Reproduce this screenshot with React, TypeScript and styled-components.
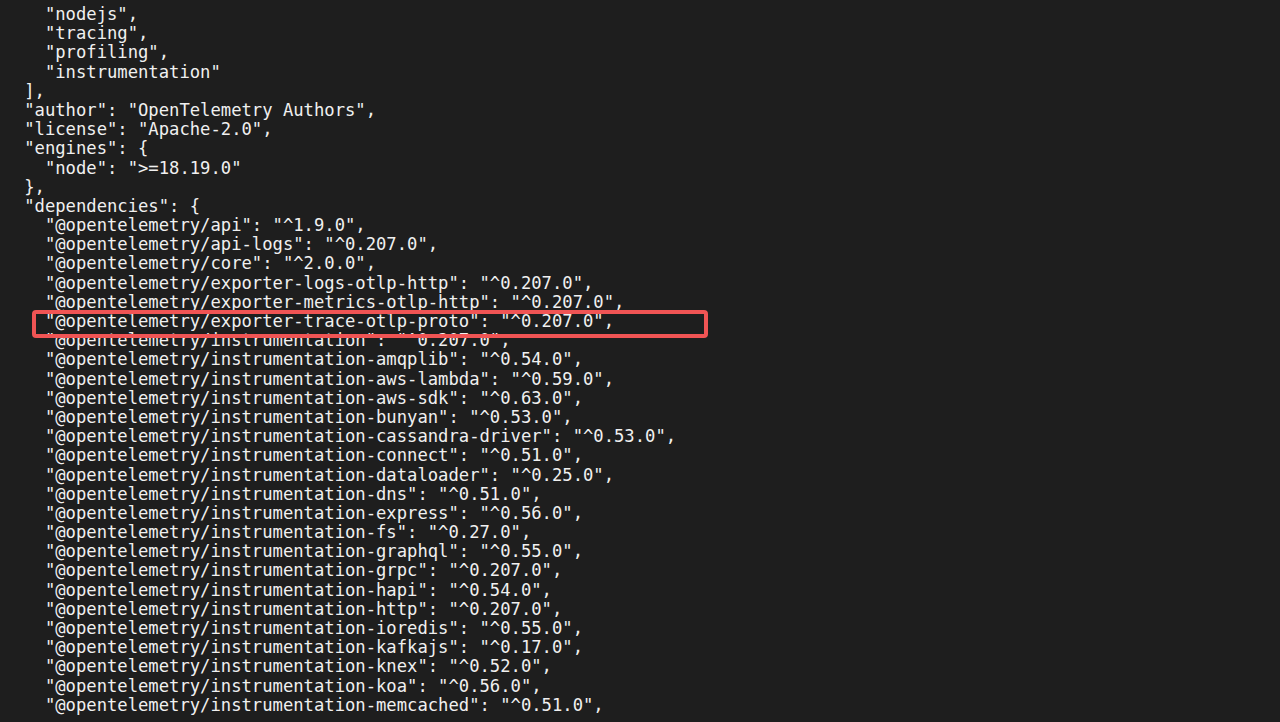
import React from "react";
import styled, { createGlobalStyle } from "styled-components";

const GlobalStyle = createGlobalStyle`
  html, body {
    margin: 0;
    padding: 0;
    background: #1e1e1e;
  }
  body {
    width: 1280px;
    height: 722px;
    overflow: hidden;
  }
`;

const Screen = styled.div`
  position: relative;
  width: 1280px;
  height: 722px;
  background: #1e1e1e;
  overflow: hidden;
`;

const Code = styled.pre`
  margin: 0;
  padding: 5px 0 0 3.5px;
  font-family: "DejaVu Sans Mono", "Liberation Mono", monospace;
  font-size: 17.2px;
  line-height: 19.2px;
  color: #f0f0f0;
  white-space: pre;
`;

const Line = styled.div`
  height: 19.2px;
`;

const Highlight = styled.div`
  position: absolute;
  left: 32px;
  top: 310px;
  width: 676px;
  height: 28px;
  box-sizing: border-box;
  border: 4px solid #f05454;
  border-radius: 4px;
  pointer-events: none;
`;

const lines: string[] = [
  '    "nodejs",',
  '    "tracing",',
  '    "profiling",',
  '    "instrumentation"',
  "  ],",
  '  "author": "OpenTelemetry Authors",',
  '  "license": "Apache-2.0",',
  '  "engines": {',
  '    "node": ">=18.19.0"',
  "  },",
  '  "dependencies": {',
  '    "@opentelemetry/api": "^1.9.0",',
  '    "@opentelemetry/api-logs": "^0.207.0",',
  '    "@opentelemetry/core": "^2.0.0",',
  '    "@opentelemetry/exporter-logs-otlp-http": "^0.207.0",',
  '    "@opentelemetry/exporter-metrics-otlp-http": "^0.207.0",',
  '    "@opentelemetry/exporter-trace-otlp-proto": "^0.207.0",',
  '    "@opentelemetry/instrumentation": "^0.207.0",',
  '    "@opentelemetry/instrumentation-amqplib": "^0.54.0",',
  '    "@opentelemetry/instrumentation-aws-lambda": "^0.59.0",',
  '    "@opentelemetry/instrumentation-aws-sdk": "^0.63.0",',
  '    "@opentelemetry/instrumentation-bunyan": "^0.53.0",',
  '    "@opentelemetry/instrumentation-cassandra-driver": "^0.53.0",',
  '    "@opentelemetry/instrumentation-connect": "^0.51.0",',
  '    "@opentelemetry/instrumentation-dataloader": "^0.25.0",',
  '    "@opentelemetry/instrumentation-dns": "^0.51.0",',
  '    "@opentelemetry/instrumentation-express": "^0.56.0",',
  '    "@opentelemetry/instrumentation-fs": "^0.27.0",',
  '    "@opentelemetry/instrumentation-graphql": "^0.55.0",',
  '    "@opentelemetry/instrumentation-grpc": "^0.207.0",',
  '    "@opentelemetry/instrumentation-hapi": "^0.54.0",',
  '    "@opentelemetry/instrumentation-http": "^0.207.0",',
  '    "@opentelemetry/instrumentation-ioredis": "^0.55.0",',
  '    "@opentelemetry/instrumentation-kafkajs": "^0.17.0",',
  '    "@opentelemetry/instrumentation-knex": "^0.52.0",',
  '    "@opentelemetry/instrumentation-koa": "^0.56.0",',
  '    "@opentelemetry/instrumentation-memcached": "^0.51.0",',
];

export default function App() {
  return (
    <Screen>
      <GlobalStyle />
      <Code>
        {lines.map((l, i) => (
          <Line key={i}>{l}</Line>
        ))}
      </Code>
      <Highlight />
    </Screen>
  );
}
